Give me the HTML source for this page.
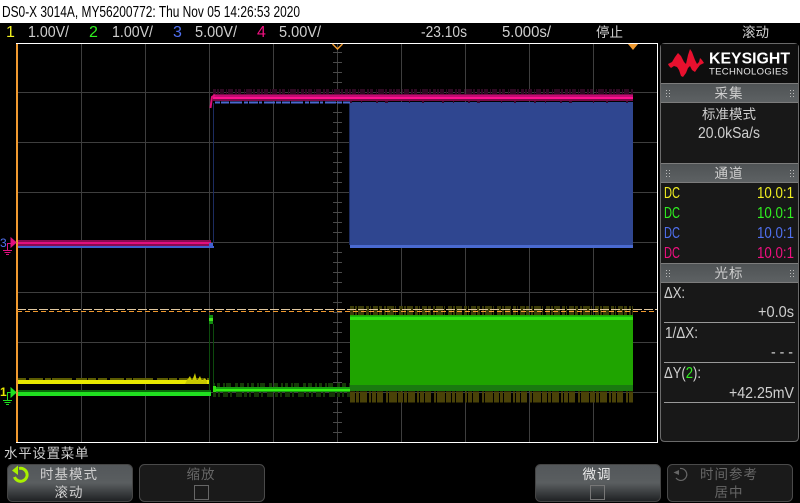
<!DOCTYPE html>
<html><head><meta charset="utf-8">
<style>
html,body{margin:0;padding:0;background:#000;width:800px;height:503px;overflow:hidden}
svg{display:block}
text{font-family:"Liberation Sans","WenQuanYi Zen Hei",sans-serif;fill:#cfcfcf;font-size:16px}
.c{font-family:"WenQuanYi Zen Hei","Noto Sans CJK SC",sans-serif;font-size:13.5px}
</style></head><body>
<svg width="800" height="503" viewBox="0 0 800 503" xmlns="http://www.w3.org/2000/svg">
<defs>
<linearGradient id="hd" x1="0" y1="0" x2="0" y2="1"><stop offset="0" stop-color="#4e5254"/><stop offset="1" stop-color="#5e6264"/></linearGradient>
<linearGradient id="btn" x1="0" y1="0" x2="0" y2="1"><stop offset="0" stop-color="#53575a"/><stop offset=".5" stop-color="#5a5e60"/><stop offset="1" stop-color="#1e2022"/></linearGradient>
</defs>
<rect width="800" height="503" fill="#000"/>
<rect width="800" height="23" fill="#fff"/>
<text x="2" y="17" style="fill:#000;font-size:16px" textLength="298" lengthAdjust="spacingAndGlyphs">DS0-X 3014A, MY56200772: Thu Nov 05 14:26:53 2020</text>

<text x="6" y="37" style="fill:#f0f020">1</text>
<text x="28" y="37" textLength="41" lengthAdjust="spacingAndGlyphs">1.00V/</text>
<text x="89" y="37" style="fill:#30f020">2</text>
<text x="112" y="37" textLength="41" lengthAdjust="spacingAndGlyphs">1.00V/</text>
<text x="173" y="37" style="fill:#5070f0">3</text>
<text x="195" y="37" textLength="42" lengthAdjust="spacingAndGlyphs">5.00V/</text>
<text x="257" y="37" style="fill:#f01080">4</text>
<text x="279" y="37" textLength="42" lengthAdjust="spacingAndGlyphs">5.00V/</text>
<text x="421" y="37" textLength="46" lengthAdjust="spacingAndGlyphs">-23.10s</text>
<text x="502" y="37" textLength="49" lengthAdjust="spacingAndGlyphs">5.000s/</text>
<text x="596" y="37" class="c">停止</text>
<text x="742" y="37" class="c">滚动</text>

<!-- grid -->
<g stroke="#3e3e3e" stroke-width="1">
<path d="M81.5 44V442M145.5 44V442M209.5 44V442M273.5 44V442M337.5 44V442M401.5 44V442M465.5 44V442M529.5 44V442M593.5 44V442"/>
<path d="M17 92.5H657M17 142.5H657M17 192.5H657M17 242.5H657M17 292.5H657M17 342.5H657M17 392.5H657"/>
<path stroke="#4a4a4a" d="M333 52.5h9M333 62.5h9M333 72.5h9M333 82.5h9M333 102.5h9M333 112.5h9M333 122.5h9M333 132.5h9M333 152.5h9M333 162.5h9M333 172.5h9M333 182.5h9M333 202.5h9M333 212.5h9M333 222.5h9M333 232.5h9M333 252.5h9M333 262.5h9M333 272.5h9M333 282.5h9M333 302.5h9M333 312.5h9M333 322.5h9M333 332.5h9M333 352.5h9M333 362.5h9M333 372.5h9M333 382.5h9M333 402.5h9M333 412.5h9M333 422.5h9M333 432.5h9"/>
</g>

<!-- blue block -->
<rect x="350" y="102" width="283" height="143" fill="#2f4690"/>
<rect x="350" y="245" width="283" height="3" fill="#4a6ad0"/>
<rect x="349" y="102" width="1" height="143" fill="#1c2c60"/>

<!-- pink/blue high level -->
<line x1="213" y1="91.500" x2="633" y2="91.500" stroke="#2e0a22" stroke-width="5" stroke-dasharray="3 1 2 1 4 2 1 1 5 2 2 1 3 3 1 1 6 1 2 2"/>
<rect x="213" y="94" width="420" height="7" fill="#7a0a48"/>
<rect x="213" y="95" width="420" height="2" fill="#c00c70"/>
<rect x="213" y="97" width="420" height="2" fill="#ff1090"/>
<line x1="215" y1="102.500" x2="350" y2="102.500" stroke="#4a68d0" stroke-width="2" stroke-dasharray="5 1 8 1 12 2 4 1 9 1 3 2 11 1"/>
<line x1="350" y1="102" x2="633" y2="102" stroke="#3a0a30" stroke-width="2" stroke-dasharray="2 9 1 14 2 7 3 21 1 12 2 18"/>
<path d="M210.500 108L212 97L215 95" stroke="#e0107a" stroke-width="2" fill="none"/>
<path d="M213.500 103V243" stroke="#1c2c60" stroke-width="1"/>

<!-- pink/blue low level -->
<rect x="17" y="240" width="194" height="6" fill="#8a0a50"/>
<rect x="17" y="242" width="194" height="2" fill="#e01080"/>
<rect x="17" y="246" width="197" height="2" fill="#4060d0"/>
<rect x="209" y="243" width="4" height="5" fill="#4060d0"/>

<!-- green block -->
<line x1="350" y1="311" x2="633" y2="311" stroke="#3c3c08" stroke-width="10" stroke-dasharray="4 1 2 1 6 2 3 1 1 2 5 1 3 2 2 1 7 1 1 3"/>
<rect x="350" y="315" width="283" height="76" fill="#1fa400"/>
<rect x="350" y="316" width="283" height="1" fill="#18b810"/>
<rect x="350" y="317" width="283" height="3" fill="#30e010"/>
<rect x="350" y="385" width="283" height="6" fill="#1a7a10"/>
<line x1="350" y1="397" x2="633" y2="397" stroke="#4a4208" stroke-width="11" stroke-dasharray="5 1 3 1 7 2 2 1 4 1 6 3 2 1 8 1"/>

<!-- dashes -->
<line x1="17" y1="309.500" x2="657" y2="309.500" stroke="#e0c8a0" stroke-width="1" stroke-dasharray="9 2"/>
<line x1="17" y1="311.500" x2="657" y2="311.500" stroke="#f09a30" stroke-width="1" stroke-dasharray="5 3"/>

<!-- green/yellow left -->
<line x1="17" y1="379" x2="209" y2="379" stroke="#5c5c00" stroke-width="2" stroke-dasharray="9 3 14 2 6 1 20 4 11 1 8 2"/>
<rect x="17" y="380" width="192" height="4" fill="#e8e800"/>
<path d="M187 380l3-4 2 5 3-8 2 8 3-5 2 5 3-3 2 3v3h-22z" fill="#c8c800"/>
<rect x="17" y="390" width="194" height="2" fill="#0a6a0a"/>
<rect x="17" y="392" width="194" height="4" fill="#20e020"/>

<!-- green right of step -->
<line x1="213" y1="385.500" x2="350" y2="385.500" stroke="#163c08" stroke-width="5" stroke-dasharray="2 2 3 3 2 1 5 4 3 2 4 3"/>
<line x1="213" y1="394.500" x2="350" y2="394.500" stroke="#163408" stroke-width="5" stroke-dasharray="3 2 2 3 5 2 2 4 6 2"/>
<rect x="213" y="387" width="137" height="5" fill="#17a010"/>
<rect x="213" y="389" width="137" height="2" fill="#30f010"/>
<rect x="213" y="386" width="3" height="6" fill="#30e010"/>
<rect x="209" y="315" width="4" height="9" fill="#128a10"/>
<rect x="209" y="318" width="4" height="3" fill="#40e020"/>
<path d="M209.500 324V390M213.500 324V386" stroke="#0d4a0d" stroke-width="1"/>

<!-- border of scope -->
<rect x="16" y="43" width="642" height="1" fill="#fff"/>
<rect x="16" y="442" width="642" height="1" fill="#fff"/>
<rect x="657" y="43" width="1" height="400" fill="#fff"/>
<rect x="16" y="44" width="2" height="398" fill="#f09a30"/>

<!-- trigger markers -->
<path d="M332.500 44L337.500 49L342.500 44" fill="none" stroke="#f09a30" stroke-width="1.500"/>
<path d="M628 44H638L633 50Z" fill="#f09a30"/>

<!-- ground markers -->
<path d="M11 238L16 242.500L11 247Z" fill="#e01080" stroke="#e01080"/>
<path d="M11 243.500H7.500V250M3 250.500H12M4.500 252.500H10.500M6 254.500H9" stroke="#e01080" fill="none"/>
<text x="0" y="247" style="fill:#5070f0;font-size:12px">3</text>
<path d="M11 388L16 392.500L11 397Z" fill="#20e020" stroke="#20e020"/>
<path d="M11 392.500H7.500V400M3 400.500H12M4.500 402.500H10.500M6 404.500H9" stroke="#20e020" fill="none"/>
<text x="0" y="396" style="fill:#e8e800;font-size:12px;font-weight:bold">1</text>

<!-- right panel -->
<path d="M665 43.500H794Q798.500 43.500 798.500 48V437Q798.500 441.500 794 441.500H665Q660.500 441.500 660.500 437V48Q660.500 43.500 665 43.500Z" fill="#181818" stroke="#6a6a6a"/>
<rect x="661" y="44" width="137" height="39" fill="#0e0e0e"/>
<!-- logo -->
<path d="M668 64L672 62L675 57L678 53L681 56L684 62L686 64L688 55L690 49L692 52L695 60L697 64L699 62L700 58L702 60L704 63L700 65L697 69L695 72L692 70L690 66L688 68L686 73L683 77L681 76L679 70L677 67L674 66L671 68L669 66Z" fill="#e8102e"/>
<text x="709" y="63.500" style="fill:#fff;font-size:16px;font-weight:bold" textLength="81" lengthAdjust="spacingAndGlyphs">KEYSIGHT</text>
<text x="709" y="74.500" style="fill:#e8e8e8;font-size:9.500px" textLength="79" lengthAdjust="spacing">TECHNOLOGIES</text>

<!-- headers -->
<rect x="661" y="83" width="137" height="20" fill="url(#hd)"/><path d="M661 83.500H798M661 102.500H798" stroke="#7c7c7c"/>
<rect x="661" y="163" width="137" height="20" fill="url(#hd)"/><path d="M661 163.500H798M661 182.500H798" stroke="#7c7c7c"/>
<rect x="661" y="263" width="137" height="20" fill="url(#hd)"/><path d="M661 263.500H798M661 282.500H798" stroke="#7c7c7c"/>
<g fill="#bbb">
<path d="M666 90h1v1h-1zM669 90h1v1h-1zM666 93h1v1h-1zM669 93h1v1h-1zM666 96h1v1h-1zM669 96h1v1h-1zM790 90h1v1h-1zM793 90h1v1h-1zM790 93h1v1h-1zM793 93h1v1h-1zM790 96h1v1h-1zM793 96h1v1h-1z"/>
<path d="M666 170h1v1h-1zM669 170h1v1h-1zM666 173h1v1h-1zM669 173h1v1h-1zM666 176h1v1h-1zM669 176h1v1h-1zM790 170h1v1h-1zM793 170h1v1h-1zM790 173h1v1h-1zM793 173h1v1h-1zM790 176h1v1h-1zM793 176h1v1h-1z"/>
<path d="M666 270h1v1h-1zM669 270h1v1h-1zM666 273h1v1h-1zM669 273h1v1h-1zM666 276h1v1h-1zM669 276h1v1h-1zM790 270h1v1h-1zM793 270h1v1h-1zM790 273h1v1h-1zM793 273h1v1h-1zM790 276h1v1h-1zM793 276h1v1h-1z"/>
</g>
<text x="729" y="98" class="c" text-anchor="middle" style="letter-spacing:1px">采集</text>
<text x="729" y="178" class="c" text-anchor="middle" style="letter-spacing:1px">通道</text>
<text x="729" y="278" class="c" text-anchor="middle" style="letter-spacing:1px">光标</text>
<text x="729" y="119" class="c" text-anchor="middle">标准模式</text>
<text x="698" y="138" textLength="62" lengthAdjust="spacingAndGlyphs">20.0kSa/s</text>

<text x="664" y="198" style="fill:#f0f020" textLength="16" lengthAdjust="spacingAndGlyphs">DC</text>
<text x="664" y="218" style="fill:#30f020" textLength="16" lengthAdjust="spacingAndGlyphs">DC</text>
<text x="664" y="238" style="fill:#5070f0" textLength="16" lengthAdjust="spacingAndGlyphs">DC</text>
<text x="664" y="258" style="fill:#f01080" textLength="16" lengthAdjust="spacingAndGlyphs">DC</text>
<text x="757" y="198" style="fill:#f0f020" textLength="37" lengthAdjust="spacingAndGlyphs">10.0:1</text>
<text x="757" y="218" style="fill:#30f020" textLength="37" lengthAdjust="spacingAndGlyphs">10.0:1</text>
<text x="757" y="238" style="fill:#5070f0" textLength="37" lengthAdjust="spacingAndGlyphs">10.0:1</text>
<text x="757" y="258" style="fill:#f01080" textLength="37" lengthAdjust="spacingAndGlyphs">10.0:1</text>

<text x="664" y="298" textLength="21" lengthAdjust="spacingAndGlyphs">ΔX:</text>
<text x="758" y="317" textLength="36" lengthAdjust="spacingAndGlyphs">+0.0s</text>
<path d="M664 322.500H795M664 362.500H795M664 402.500H795" stroke="#999"/>
<text x="665" y="338" textLength="33" lengthAdjust="spacingAndGlyphs">1/ΔX:</text>
<text x="771" y="357" textLength="22" lengthAdjust="spacingAndGlyphs">- - -</text>
<text x="664" y="378" textLength="37" lengthAdjust="spacingAndGlyphs">ΔY(<tspan style="fill:#30f020">2</tspan>):</text>
<text x="729" y="398" textLength="65" lengthAdjust="spacingAndGlyphs">+42.25mV</text>

<!-- message -->
<text x="4" y="458" class="c" style="letter-spacing:.7px">水平设置菜单</text>

<!-- softkeys -->
<rect x="7.500" y="464.500" width="125" height="37" rx="5" fill="url(#btn)" stroke="#444"/>
<path d="M19 468.500A6.500 6.500 0 1 1 14.500 477" fill="none" stroke="#a8f000" stroke-width="3"/>
<path d="M18 465.500V475L12 470.500Z" fill="#a8f000"/>
<text x="69" y="479" class="c" text-anchor="middle" style="letter-spacing:1px">时基模式</text>
<text x="69" y="497" class="c" text-anchor="middle" style="letter-spacing:1px">滚动</text>

<rect x="139.500" y="464.500" width="125" height="37" rx="5" fill="#1a1a1a" stroke="#4a4a4a"/>
<text x="201" y="479" class="c" text-anchor="middle" style="fill:#666;letter-spacing:1px">缩放</text>
<rect x="194.500" y="485.500" width="14" height="14" fill="none" stroke="#666"/>

<rect x="535.500" y="464.500" width="125" height="37" rx="5" fill="url(#btn)" stroke="#444"/>
<text x="597" y="479" class="c" text-anchor="middle" style="letter-spacing:1px;fill:#eee">微调</text>
<rect x="590.500" y="485.500" width="14" height="14" fill="none" stroke="#777"/>

<rect x="667.500" y="464.500" width="125" height="37" rx="5" fill="#1a1a1a" stroke="#4a4a4a"/>
<path d="M680 468.500A6 6 0 1 1 676 478" fill="none" stroke="#666" stroke-width="1.200"/>
<path d="M679 470V475L673.500 472.500Z" fill="#666"/>
<text x="729" y="479" class="c" text-anchor="middle" style="fill:#666;letter-spacing:1px">时间参考</text>
<text x="729" y="497" class="c" text-anchor="middle" style="fill:#666;letter-spacing:1px">居中</text>
</svg>
</body></html>
